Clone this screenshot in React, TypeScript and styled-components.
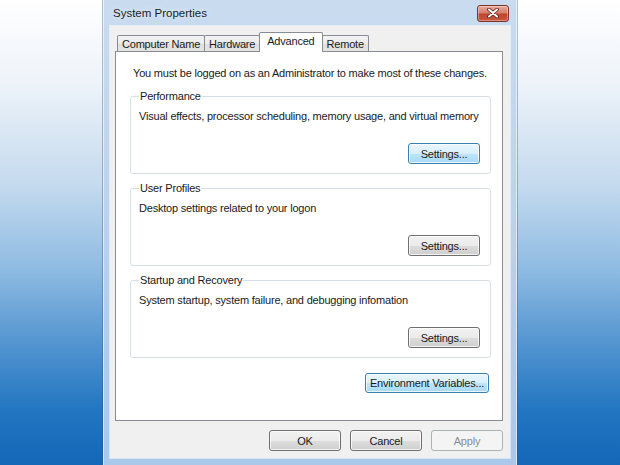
import React from "react";
import styled, { createGlobalStyle, css } from "styled-components";

const Global = createGlobalStyle`
  html, body { margin: 0; padding: 0; }
  body {
    width: 620px;
    height: 465px;
    overflow: hidden;
    font-family: "Liberation Sans", Arial, sans-serif;
  }
`;

const Desktop = styled.div`
  width: 620px;
  height: 465px;
  display: flex;
  justify-content: center;
  background: linear-gradient(
    180deg,
    #ffffff 0%,
    #edf3f9 18%,
    #c4daee 40%,
    #8ebbe2 58%,
    #4f92cf 75%,
    #2376c1 88%,
    #1467b7 100%
  );
`;

const Window = styled.div`
  width: 414px;
  height: 465px;
  box-sizing: border-box;
  display: flex;
  flex-direction: column;
  padding: 0 7px 7px 7px;
  background: linear-gradient(180deg, #c9dbef 0%, #bfd5ed 35%, #b2cdec 70%, #a9c8ea 100%);
  box-shadow: inset 1px 0 0 rgba(255, 255, 255, 0.55), inset -1px 0 0 rgba(255, 255, 255, 0.55),
    -1px 0 0 rgba(40, 80, 130, 0.35), 1px 0 0 rgba(40, 80, 130, 0.35);
`;

const TitleBar = styled.div`
  height: 26px;
  display: flex;
  align-items: center;
  justify-content: space-between;
  padding: 0 1px 0 3px;
`;

const Title = styled.span`
  font-size: 11.5px;
  color: #1c1c1c;
  text-shadow: 0 0 6px rgba(255, 255, 255, 0.9);
`;

const CloseButton = styled.div`
  width: 32px;
  height: 17px;
  box-sizing: border-box;
  border: 1px solid #7d332a;
  border-radius: 3px;
  display: flex;
  align-items: center;
  justify-content: center;
  background: linear-gradient(180deg, #e9a99c 0%, #d8806f 45%, #c0452f 55%, #c8583f 100%);
  box-shadow: inset 0 0 0 1px rgba(255, 255, 255, 0.35);
`;

const Client = styled.div`
  flex: 1;
  display: flex;
  flex-direction: column;
  background: #f0f0f0;
  padding: 6px 7px 7px 5px;
  box-shadow: 0 0 0 1px rgba(255, 255, 255, 0.5);
`;

const TabStrip = styled.div`
  height: 19px;
  display: flex;
  align-items: flex-end;
  padding-left: 2px;
  position: relative;
  z-index: 1;
`;

const Tab = styled.div<{ $active?: boolean }>`
  box-sizing: border-box;
  height: 16px;
  padding: 0 4px;
  display: flex;
  align-items: center;
  font-size: 11px;
  letter-spacing: -0.2px;
  color: #1a1a1a;
  border: 1px solid #898c95;
  border-bottom: none;
  margin-right: -1px;
  border-radius: 2px 2px 0 0;
  background: linear-gradient(180deg, #f3f3f3 0%, #ebebeb 50%, #dedede 51%, #e4e4e4 100%);
  ${(p) =>
    p.$active &&
    css`
      height: 20px;
      margin-bottom: -1px;
      padding: 0 7px 3px;
      background: #ffffff;
      position: relative;
      z-index: 2;
    `}
`;

const Panel = styled.div`
  flex: 1;
  box-sizing: border-box;
  display: flex;
  flex-direction: column;
  background: #ffffff;
  border: 1px solid #898c95;
  padding: 14px 11px 0 14px;
`;

const Text = styled.div<{ $indent?: number }>`
  font-size: 11px;
  line-height: 14px;
  letter-spacing: -0.2px;
  color: #1a1a1a;
  white-space: nowrap;
  margin-left: ${(p) => p.$indent ?? 0}px;
`;

const Intro = styled(Text)`
  margin-bottom: 9px;
`;

const GroupBox = styled.fieldset`
  margin: 0 0 7px 0;
  border: 1px solid #d5dfe5;
  border-radius: 3px;
  padding: 0 10px 9px 8px;
  min-width: 0;
`;

const Legend = styled.legend`
  padding: 0 1px;
  margin: 0;
  font-size: 11px;
  line-height: 14px;
  letter-spacing: -0.2px;
  color: #1a1a1a;
`;

const Description = styled(Text)`
  margin-top: 6px;
`;

const ButtonRow = styled.div<{ $top: number; $right?: number }>`
  display: flex;
  justify-content: flex-end;
  margin-top: ${(p) => p.$top}px;
  padding-right: ${(p) => p.$right ?? 0}px;
`;

type Variant = "normal" | "focus" | "disabled";

const Button = styled.button<{ $variant?: Variant; $width?: number; $height?: number }>`
  width: ${(p) => p.$width ?? 72}px;
  height: ${(p) => p.$height ?? 21}px;
  box-sizing: border-box;
  padding: 0;
  border-radius: 3px;
  font-family: "Liberation Sans", Arial, sans-serif;
  font-size: 11px;
  letter-spacing: -0.2px;
  color: #1a1a1a;
  border: 1px solid #707070;
  background: linear-gradient(180deg, #f2f2f2 0%, #ebebeb 50%, #dddddd 51%, #cfcfcf 100%);
  box-shadow: inset 0 0 0 1px rgba(255, 255, 255, 0.75);
  ${(p) =>
    p.$variant === "focus" &&
    css`
      border-color: #3c7fb1;
      background: linear-gradient(180deg, #eaf6fd 0%, #d9f0fc 50%, #bee6fd 51%, #a7d9f5 100%);
    `}
  ${(p) =>
    p.$variant === "disabled" &&
    css`
      border-color: #adb2b5;
      background: #f4f4f4;
      color: #8d8d8d;
      box-shadow: none;
    `}
`;

const Footer = styled.div`
  display: flex;
  justify-content: flex-end;
  gap: 9px;
  padding-top: 9px;
`;

const groups = [
  {
    title: "Performance",
    text: "Visual effects, processor scheduling, memory usage, and virtual memory",
    focus: true,
  },
  { title: "User Profiles", text: "Desktop settings related to your logon", focus: false },
  {
    title: "Startup and Recovery",
    text: "System startup, system failure, and debugging infomation",
    focus: false,
  },
];

export default function App() {
  return (
    <>
      <Global />
      <Desktop>
        <Window>
          <TitleBar>
            <Title>System Properties</Title>
            <CloseButton>
              <svg width="12" height="10" viewBox="0 0 12 10">
                <path d="M2 1.5 L10 8.5 M10 1.5 L2 8.5" stroke="#5b1d15" strokeWidth="3.6" strokeLinecap="round" />
                <path d="M2 1.5 L10 8.5 M10 1.5 L2 8.5" stroke="#ffffff" strokeWidth="2" strokeLinecap="round" />
              </svg>
            </CloseButton>
          </TitleBar>
          <Client>
            <TabStrip>
              <Tab>Computer Name</Tab>
              <Tab>Hardware</Tab>
              <Tab $active>Advanced</Tab>
              <Tab>Remote</Tab>
            </TabStrip>
            <Panel>
              <Intro $indent={3}>You must be logged on as an Administrator to make most of these changes.</Intro>
              {groups.map((g) => (
                <GroupBox key={g.title}>
                  <Legend>{g.title}</Legend>
                  <Description>{g.text}</Description>
                  <ButtonRow $top={20}>
                    <Button $variant={g.focus ? "focus" : "normal"}>Settings...</Button>
                  </ButtonRow>
                </GroupBox>
              ))}
              <ButtonRow $top={8} $right={2}>
                <Button $variant="focus" $width={124} $height={20}>
                  Environment Variables...
                </Button>
              </ButtonRow>
            </Panel>
            <Footer>
              <Button>OK</Button>
              <Button>Cancel</Button>
              <Button $variant="disabled">Apply</Button>
            </Footer>
          </Client>
        </Window>
      </Desktop>
    </>
  );
}
